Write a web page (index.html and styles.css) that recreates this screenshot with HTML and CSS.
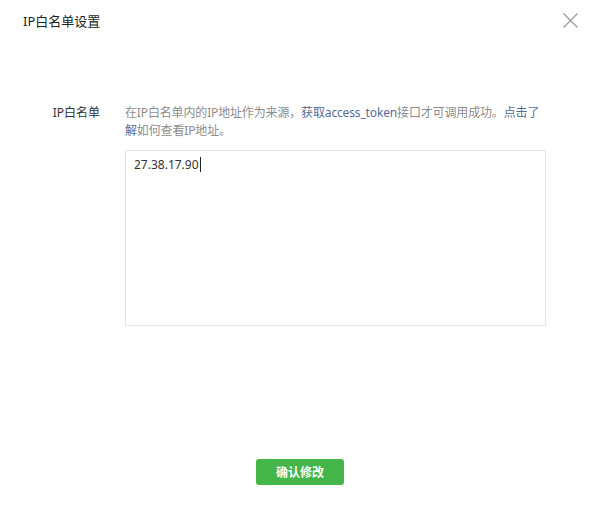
FILE: index.html
```html
<!DOCTYPE html>
<html lang="zh-CN">
<head>
    <meta charset="UTF-8">
    <meta name="viewport" content="width=device-width, initial-scale=1.0">
    <title>IP白名单设置</title>
    <link rel="stylesheet" href="styles.css">
</head>
<body>
<div class="dialog">
    <div class="dialog-head">
        <h3 class="dialog-title">IP白名单设置</h3>
        <a class="dialog-close" href="#" title="关闭">
            <svg width="15" height="15" viewBox="0 0 15 15">
                <path d="M0.5 0.5 L14.5 14.5 M14.5 0.5 L0.5 14.5" stroke="#9a9a9a" stroke-width="1.3" fill="none"/>
            </svg>
        </a>
    </div>

    <div class="form-row">
        <label class="form-label" for="ip-list">IP白名单</label>
        <div class="form-field">
            <p class="form-tips">在IP白名单内的IP地址作为来源，<a href="#">获取access_token</a>接口才可调用成功。<a href="#">点击了解</a>如何查看IP地址。</p>
            <div class="ip-box" id="ip-list">27.38.17.90<span class="caret"></span></div>
        </div>
    </div>

    <div class="dialog-foot">
        <button class="btn-primary" type="button">确认修改</button>
    </div>
</div>
</body>
</html>
```

FILE: styles.css
```css
    body {
        margin: 0;
        background: #fff;
        font-family: "Noto Sans", "Noto Sans CJK SC", sans-serif;
        color: #333;
    }
    .dialog {
        width: 600px;
    }
    .dialog-head {
        display: flex;
        justify-content: space-between;
        align-items: center;
        height: 40px;
        padding: 0 22px 0 23px;
    }
    .dialog-title {
        margin: 0;
        font-size: 13px;
        font-weight: normal;
        color: #222;
    }
    .dialog-close {
        display: flex;
        width: 15px;
        height: 15px;
        margin-top: 1px;
    }
    .form-row {
        display: flex;
        margin-top: 64px;
    }
    .form-label {
        width: 100px;
        text-align: right;
        font-size: 12px;
        line-height: 18px;
        color: #333;
    }
    .form-field {
        width: 421px;
        margin-left: 25px;
    }
    .form-tips {
        margin: 0;
        font-size: 12px;
        line-height: 18px;
        letter-spacing: -0.15px;
        color: #8d8d8d;
    }
    .form-tips a {
        color: #576b95;
        text-decoration: none;
    }
    .ip-box {
        margin-top: 10px;
        height: 176px;
        box-sizing: border-box;
        border: 1px solid #e4e4e4;
        padding: 4px 8px;
        font-size: 12px;
        line-height: 20px;
        color: #333;
    }
    .caret {
        display: inline-block;
        width: 1px;
        height: 15px;
        margin-left: 1px;
        vertical-align: -3px;
        background: #222;
    }
    .dialog-foot {
        display: flex;
        justify-content: center;
        margin-top: 133px;
    }
    .btn-primary {
        width: 88px;
        height: 26px;
        border: 0;
        border-radius: 3px;
        background: #44b549;
        color: #fff;
        font-family: inherit;
        font-size: 12px;
        font-weight: bold;
    }
```
